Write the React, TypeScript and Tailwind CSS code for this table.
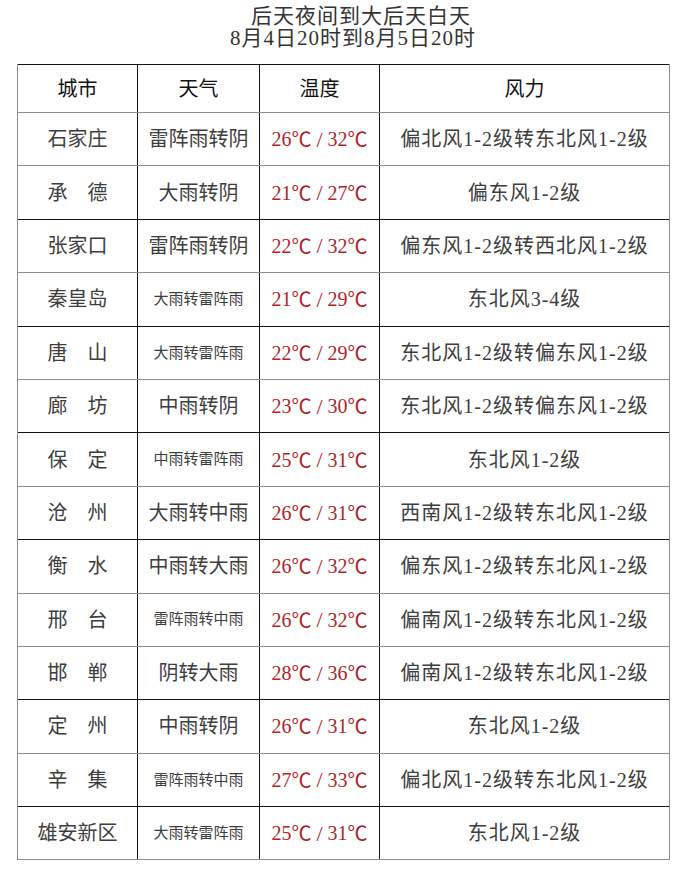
type Row = {
  city: string;
  weather: string;
  small?: boolean;
  low: number;
  high: number;
  wind: string;
  thick?: boolean;
};

const rows: Row[] = [
  { city: "石家庄", weather: "雷阵雨转阴", low: 26, high: 32, wind: "偏北风1-2级转东北风1-2级" },
  { city: "承　德", weather: "大雨转阴", low: 21, high: 27, wind: "偏东风1-2级" },
  { city: "张家口", weather: "雷阵雨转阴", low: 22, high: 32, wind: "偏东风1-2级转西北风1-2级", thick: true },
  { city: "秦皇岛", weather: "大雨转雷阵雨", small: true, low: 21, high: 29, wind: "东北风3-4级" },
  { city: "唐　山", weather: "大雨转雷阵雨", small: true, low: 22, high: 29, wind: "东北风1-2级转偏东风1-2级", thick: true },
  { city: "廊　坊", weather: "中雨转阴", low: 23, high: 30, wind: "东北风1-2级转偏东风1-2级" },
  { city: "保　定", weather: "中雨转雷阵雨", small: true, low: 25, high: 31, wind: "东北风1-2级", thick: true },
  { city: "沧　州", weather: "大雨转中雨", low: 26, high: 31, wind: "西南风1-2级转东北风1-2级" },
  { city: "衡　水", weather: "中雨转大雨", low: 26, high: 32, wind: "偏东风1-2级转东北风1-2级", thick: true },
  { city: "邢　台", weather: "雷阵雨转中雨", small: true, low: 26, high: 32, wind: "偏南风1-2级转东北风1-2级" },
  { city: "邯　郸", weather: "阴转大雨", low: 28, high: 36, wind: "偏南风1-2级转东北风1-2级" },
  { city: "定　州", weather: "中雨转阴", low: 26, high: 31, wind: "东北风1-2级", thick: true },
  { city: "辛　集", weather: "雷阵雨转中雨", small: true, low: 27, high: 33, wind: "偏北风1-2级转东北风1-2级" },
  { city: "雄安新区", weather: "大雨转雷阵雨", small: true, low: 25, high: 31, wind: "东北风1-2级", thick: true },
];

const cell = "flex items-center justify-center border-r border-[#141414]";

// the degree sign in the CJK face is one compact glyph, as in the picture
const Deg = () => <span style={{ fontFamily: '"Noto Sans CJK SC", sans-serif' }}>℃</span>;

export default function App() {
  return (
    <div
      className="h-[892px] w-[690px] bg-white pt-[5px] text-[#3d3d3d]"
      style={{ fontFamily: '"Liberation Serif", "Noto Sans CJK SC", serif' }}
    >
      <div className="pl-[16px] text-center text-[21px] leading-[22px] tracking-[1px] text-[#333]">
        <div className="pl-[16px]">后天夜间到大后天白天</div>
        <div>8月4日20时到8月5日20时</div>
      </div>

      <div className="mt-[15px] ml-[17px] w-[653px] border-x border-b border-[#8c8c8c]">
        <div className="grid h-[48px] grid-cols-[120px_122px_120px_1fr] border-t border-[#141414] text-[20px] text-[#111]">
          <div className={cell}>城市</div>
          <div className={cell}>天气</div>
          <div className={cell}>温度</div>
          <div className="flex items-center justify-center">风力</div>
        </div>

        {rows.map((r) => (
          <div
            key={r.city}
            className={`grid h-[53.4px] grid-cols-[120px_122px_120px_1fr] border-t ${
              r.thick ? "border-[#141414]" : "border-[#8c8c8c]"
            }`}
          >
            <div className={`${cell} text-[20px]`}>{r.city}</div>
            <div className={`${cell} ${r.small ? "text-[15px]" : "text-[20px]"}`}>{r.weather}</div>
            <div className={`${cell} text-[20px] text-[#b31f28]`}>
              {r.low}
              <Deg />
              <span className="mx-[5px] text-[22px]">/</span>
              {r.high}
              <Deg />
            </div>
            <div className="flex items-center justify-center text-[20px] tracking-[1px]">{r.wind}</div>
          </div>
        ))}
      </div>
    </div>
  );
}
